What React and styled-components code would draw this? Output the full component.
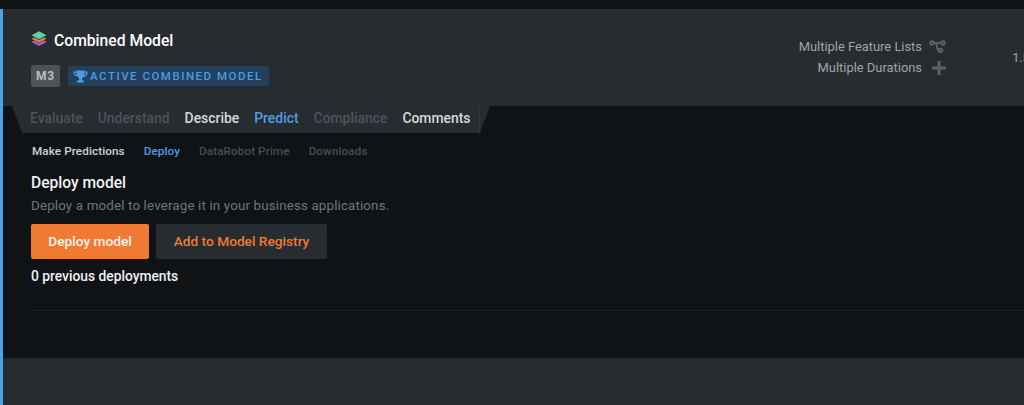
import React from "react";
import styled, { createGlobalStyle } from "styled-components";

const Global = createGlobalStyle`
  html, body { margin: 0; padding: 0; background: #0f1316; }
  #root { width: 1024px; height: 405px; overflow: hidden; }
  * { box-sizing: border-box; }
`;

const Page = styled.div`
  width: 1024px;
  height: 405px;
  overflow: hidden;
  display: flex;
  flex-direction: column;
  background: #0f1316;
  font-family: Roboto, "Liberation Sans", sans-serif;
  color: #fff;
`;
const TopStrip = styled.div`
  height: 9px;
  flex: none;
  background: #0f1316;
`;
const Row = styled.div`
  flex: 1;
  display: flex;
  flex-direction: column;
  border-left: 3px solid #4f9fe3;
`;
const Header = styled.header`
  height: 97px;
  flex: none;
  background: #272c31;
  display: flex;
  justify-content: space-between;
  padding: 20px 0 0 28px;
`;
const TitleBlock = styled.div`
  display: flex;
  flex-direction: column;
  gap: 14px;
`;
const TitleRow = styled.div`
  display: flex;
  align-items: flex-start;
  gap: 7px;
  height: 22px;
`;
const LogoSlot = styled.span`
  display: flex;
  margin-top: 2px;
`;
const Title = styled.h1`
  margin: 1px 0 0;
  font-size: 15.7px;
  font-weight: 500;
  color: #fff;
  line-height: 22px;
`;
const BadgeRow = styled.div`
  display: flex;
  align-items: center;
  gap: 8px;
`;
const ModelBadge = styled.span`
  width: 29px;
  height: 22px;
  background: #505356;
  border-radius: 2px;
  color: #bcbfc1;
  font-size: 12px;
  font-weight: 700;
  letter-spacing: 0.9px;
  display: flex;
  align-items: center;
  justify-content: center;
`;
const ActiveBadge = styled.span`
  height: 20px;
  padding: 0 6px 0 5px;
  background: #23415e;
  border-radius: 2px;
  color: #4d9be0;
  font-size: 11.5px;
  font-weight: 500;
  letter-spacing: 1.5px;
  display: flex;
  align-items: center;
  gap: 2px;
`;
const Meta = styled.div`
  display: flex;
  align-items: flex-start;
  padding-top: 9px;
`;
const MetaList = styled.div`
  display: flex;
  flex-direction: column;
  align-items: flex-end;
  gap: 3px;
  margin-right: 66px;
`;
const MetaRow = styled.div`
  display: flex;
  align-items: center;
  gap: 7px;
  font-size: 12.9px;
  line-height: 18px;
  color: #a1a4a7;
  height: 18px;
`;
const IconSlot = styled.span`
  width: 17px;
  display: flex;
  justify-content: flex-end;
`;
const Clip = styled.span`
  font-size: 13.5px;
  letter-spacing: -0.5px;
  color: #a1a4a7;
  line-height: 18px;
  margin-top: 10px;
  white-space: nowrap;
  width: 12px;
  overflow: hidden;
`;
const TabBar = styled.nav`
  margin-left: 9px;
  width: 478px;
  height: 27px;
  flex: none;
  background: #272c31;
  clip-path: polygon(0 0, 100% 0, 468px 100%, 10px 100%);
`;
const TabRow = styled.div`
  width: 468px;
  height: 100%;
  border-right: 1px solid #30353a;
  display: flex;
  align-items: center;
  gap: 15px;
  padding: 0 0 4px 18px;
`;
const Tab = styled.span`
  font-size: 13.9px;
  font-weight: 500;
  white-space: nowrap;
  color: ${(p) => ({ muted: "#4e5357", on: "#d7d9da", active: "#4f9ce0" })[p.$tone]};
`;
const SubNav = styled.div`
  display: flex;
  align-items: center;
  gap: 19px;
  height: 36px;
  padding-left: 29px;
  flex: none;
`;
const SubTab = styled.span`
  font-size: 11.7px;
  font-weight: 500;
  white-space: nowrap;
  letter-spacing: 0.1px;
  color: ${(p) => ({ muted: "#484d51", on: "#cfd1d3", active: "#4f9ce0" })[p.$tone]};
`;
const Main = styled.main`
  flex: 1;
  padding: 5px 0 0 28px;
`;
const Heading = styled.h2`
  margin: 0;
  font-size: 15.6px;
  font-weight: 500;
  line-height: 18px;
  color: #f2f3f3;
`;
const Lead = styled.p`
  margin: 5px 0 0;
  font-size: 13.4px;
  line-height: 18px;
  letter-spacing: 0.13px;
  color: #70757a;
`;
const Actions = styled.div`
  display: flex;
  gap: 7px;
  margin-top: 9px;
`;
const Button = styled.button`
  height: 35px;
  border-radius: 2px;
  border: none;
  padding: 0 0 2px;
  width: ${(p) => (p.$primary ? "118px" : "171px")};
  background: ${(p) => (p.$primary ? "#f07a33" : "#272c31")};
  color: ${(p) => (p.$primary ? "#fff4ec" : "#f07a33")};
  font-family: inherit;
  font-size: 13.7px;
  font-weight: 500;
`;
const Count = styled.div`
  margin-top: 8px;
  font-size: 13.8px;
  font-weight: 500;
  line-height: 18px;
  color: #f0f1f1;
`;
const Rule = styled.hr`
  margin: 25px 0 0;
  border: none;
  height: 1px;
  background: #1d2125;
`;
const Footer = styled.footer`
  height: 47px;
  flex: none;
  background: #272c31;
  border-top: 1px solid #21252a;
`;

const Layers = () => (
  <svg width="16" height="16" viewBox="0 0 16 16">
    <path d="M0.500 11 L8 15 L15.500 11 L13 9.600 L8 12.200 L3 9.600Z" fill="#a75fc9" />
    <path d="M0.500 7.800 L8 11.800 L15.500 7.800 L13 6.400 L8 9 L3 6.400Z" fill="#ea7b3c" />
    <path d="M8 0.300 L15.500 4.300 L8 8.300 L0.500 4.300Z" fill="#5ecfa8" />
  </svg>
);
const Trophy = () => (
  <svg width="15" height="13" viewBox="0 0 15 13" fill="#4d9be0">
    <path d="M3.500 0.500h8v1h3v1.800c0 1.900-1.500 3.300-3.600 3.500-.5.8-1.200 1.300-1.900 1.500v2.200h2v2h-7v-2h2V7.800c-.7-.2-1.400-.7-1.900-1.500C2 6.100.5 4.700.5 3.300V1.500h3zM1.800 2.700v.6c0 1 .7 1.800 1.900 2.100-.1-.8-.2-1.700-.2-2.700zm11.400 0h-1.700c0 1-.1 1.900-.2 2.700 1.200-.3 1.900-1.100 1.900-2.100z" />
  </svg>
);
const Branch = () => (
  <svg width="17" height="14" viewBox="0 0 17 14" fill="none" stroke="#5e6266" strokeWidth="2">
    <circle cx="3" cy="3" r="1.800" />
    <circle cx="14" cy="3" r="1.800" />
    <circle cx="11.500" cy="10.500" r="1.800" />
    <path d="M5 3h7M6.500 3c1.800 0 1 7.500 3.200 7.500" />
  </svg>
);
const Plus = () => (
  <svg width="14" height="14" viewBox="0 0 14 14" fill="#5e6266">
    <path d="M5.500 0h3v5.500H14v3H8.500V14h-3V8.500H0v-3h5.500z" />
  </svg>
);

export default function App() {
  return (
    <Page>
      <Global />
      <TopStrip />
      <Row>
        <Header>
          <TitleBlock>
            <TitleRow>
              <LogoSlot><Layers /></LogoSlot>
              <Title>Combined Model</Title>
            </TitleRow>
            <BadgeRow>
              <ModelBadge>M3</ModelBadge>
              <ActiveBadge>
                <Trophy />
                ACTIVE COMBINED MODEL
              </ActiveBadge>
            </BadgeRow>
          </TitleBlock>
          <Meta>
            <MetaList>
              <MetaRow>
                Multiple Feature Lists
                <IconSlot><Branch /></IconSlot>
              </MetaRow>
              <MetaRow>
                Multiple Durations
                <IconSlot><Plus /></IconSlot>
              </MetaRow>
            </MetaList>
            <Clip>1.5</Clip>
          </Meta>
        </Header>
        <TabBar>
          <TabRow>
            <Tab $tone="muted">Evaluate</Tab>
            <Tab $tone="muted">Understand</Tab>
            <Tab $tone="on">Describe</Tab>
            <Tab $tone="active">Predict</Tab>
            <Tab $tone="muted">Compliance</Tab>
            <Tab $tone="on">Comments</Tab>
          </TabRow>
        </TabBar>
        <SubNav>
          <SubTab $tone="on">Make Predictions</SubTab>
          <SubTab $tone="active">Deploy</SubTab>
          <SubTab $tone="muted">DataRobot Prime</SubTab>
          <SubTab $tone="muted">Downloads</SubTab>
        </SubNav>
        <Main>
          <Heading>Deploy model</Heading>
          <Lead>Deploy a model to leverage it in your business applications.</Lead>
          <Actions>
            <Button $primary>Deploy model</Button>
            <Button>Add to Model Registry</Button>
          </Actions>
          <Count>0 previous deployments</Count>
          <Rule />
        </Main>
        <Footer />
      </Row>
    </Page>
  );
}
